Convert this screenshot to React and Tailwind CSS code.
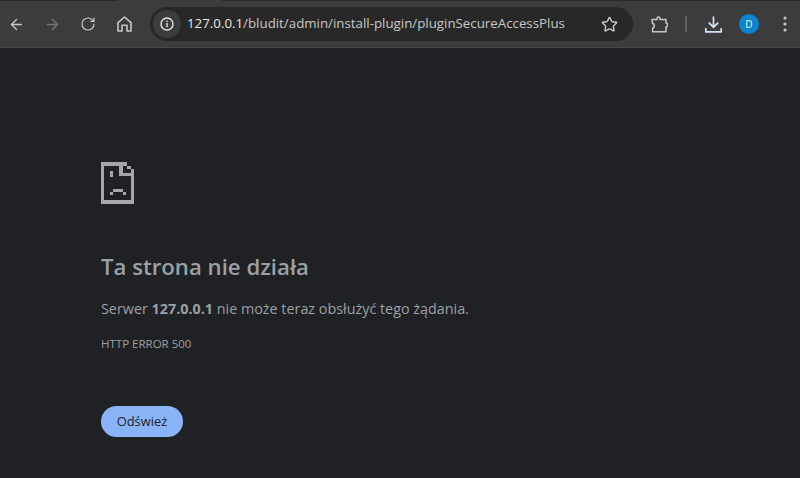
import React from 'react';
import { ArrowLeft, ArrowRight, RotateCw, Star } from 'lucide-react';

const SadFile = () => (
  <svg width="33" height="42" viewBox="33 37 99 124" shapeRendering="crispEdges" fill="#a5a7aa">
    <rect x="33" y="37" width="10" height="124" />
    <rect x="33" y="37" width="65" height="10" />
    <rect x="33" y="151" width="99" height="10" />
    <rect x="122" y="58" width="10" height="103" />
    <rect x="88" y="37" width="10" height="41" />
    <rect x="88" y="68" width="44" height="10" />
    <rect x="98" y="37" width="14" height="10" />
    <rect x="112" y="47" width="10" height="11" />
    <rect x="60" y="63" width="10" height="17" />
    <rect x="70" y="117" width="28" height="8" />
    <rect x="60" y="125" width="10" height="10" />
    <rect x="98" y="125" width="10" height="10" />
  </svg>
);

const HomeIcon = () => (
  <svg width="15" height="16" viewBox="0 0 15 16" fill="none" stroke="#c7c7c7" strokeWidth="1.6">
    <path d="M1 6.6 L7.5 1 L14 6.6 V15 H10 V9.2 H5 V15 H1 Z" strokeLinejoin="round" />
  </svg>
);

const InfoIcon = () => (
  <svg width="14" height="14" viewBox="0 0 14 14" fill="none">
    <circle cx="7" cy="7" r="6" stroke="#e3e3e3" strokeWidth="1.4" />
    <rect x="6.3" y="6" width="1.4" height="4.2" fill="#e3e3e3" />
    <rect x="6.3" y="3.6" width="1.4" height="1.4" fill="#e3e3e3" />
  </svg>
);

const PuzzleIcon = () => (
  <svg width="17" height="17" viewBox="0 0 17 17" fill="none" stroke="#c7c7c7" strokeWidth="1.5" strokeLinejoin="round">
    <path d="M1 3.5 H6 V2.4 C6 0.5 9 0.5 9 2.4 V3.5 H15 V7 C17 7 17 11 15 11 V15.8 H1.6 V12 C3.8 12 3.8 7.6 1.6 7.6 Z" />
  </svg>
);

const DownloadIcon = () => (
  <svg width="17" height="17" viewBox="0 0 17 17" fill="none" stroke="#d3e3fd" strokeWidth="1.7">
    <path d="M8.5 0.5 V11 M3.8 6.6 L8.5 11.2 L13.2 6.6 M0.8 12 V15.8 H16.2 V12" />
  </svg>
);

const DotsIcon = () => (
  <svg width="4" height="16" viewBox="0 0 4 16" fill="#c7c7c7">
    <circle cx="2" cy="2" r="1.6" />
    <circle cx="2" cy="8" r="1.6" />
    <circle cx="2" cy="14" r="1.6" />
  </svg>
);

export default function App() {
  return (
    <div className="h-[478px] w-[800px] overflow-hidden bg-[#202124] font-['Open_Sans','Noto_Sans',sans-serif]">
      {/* pasek kart - tylko gorna krawedz */}
      <div className="flex h-px bg-[#2a2a2a]">
        <div className="ml-[118px] w-[104px] bg-[#3c3c3c]" />
      </div>

      {/* pasek przegladarki */}
      <div className="flex h-[47px] items-center border-b border-b-[#4a4a4a] bg-[#3c3c3c] pl-[8px]">
        <ArrowLeft size={17} strokeWidth={1.8} color="#c7c7c7" />
        <ArrowRight size={17} strokeWidth={1.8} color="#777777" className="ml-[19px]" />
        <RotateCw size={16} strokeWidth={1.8} color="#c7c7c7" className="ml-[19px]" />
        <div className="ml-[21px]"><HomeIcon /></div>

        <div className="ml-[18px] flex h-[34px] w-[483px] items-center rounded-full bg-[#282828] pl-[3px]">
          <div className="flex h-[28px] w-[28px] items-center justify-center rounded-full bg-[#3c3c3c]">
            <InfoIcon />
          </div>
          <span className="ml-[6px] text-[13.3px] text-[#c7c7c7]">
            <span className="text-[#e8e8e8]">127.0.0.1</span>/bludit/admin/install-plugin/pluginSecureAccessPlus
          </span>
          <Star size={17} strokeWidth={2} color="#c7c7c7" className="ml-auto mr-[15px]" />
        </div>

        <div className="ml-[18px]"><PuzzleIcon /></div>
        <div className="ml-[17px] h-[16px] w-[2px] bg-[#5f5f5f]" />
        <div className="ml-[18px]"><DownloadIcon /></div>
        <div className="ml-[17px] flex h-[20px] w-[20px] items-center justify-center rounded-full bg-[#0a84d0] text-[10px] text-white">D</div>
        <div className="ml-[24px]"><DotsIcon /></div>
      </div>

      {/* strona bledu */}
      <main className="pl-[101px] pt-[114px]">
        <SadFile />
        <h1 className="mt-[48px] text-[22.2px] font-semibold leading-[30px] text-[#9aa0a6]">Ta strona nie działa</h1>
        <p className="mt-[15px] text-[14.35px] leading-[24px] text-[#9aa0a6]">
          Serwer <b className="font-bold">127.0.0.1</b> nie może teraz obsłużyć tego żądania.
        </p>
        <p className="mt-[15px] text-[11.5px] leading-[16px] text-[#9aa0a6]">HTTP ERROR 500</p>
        <button className="mt-[54px] h-[31px] w-[82px] rounded-full bg-[#8ab4f8] text-[12.9px] text-[#202124]">Odśwież</button>
      </main>
    </div>
  );
}
